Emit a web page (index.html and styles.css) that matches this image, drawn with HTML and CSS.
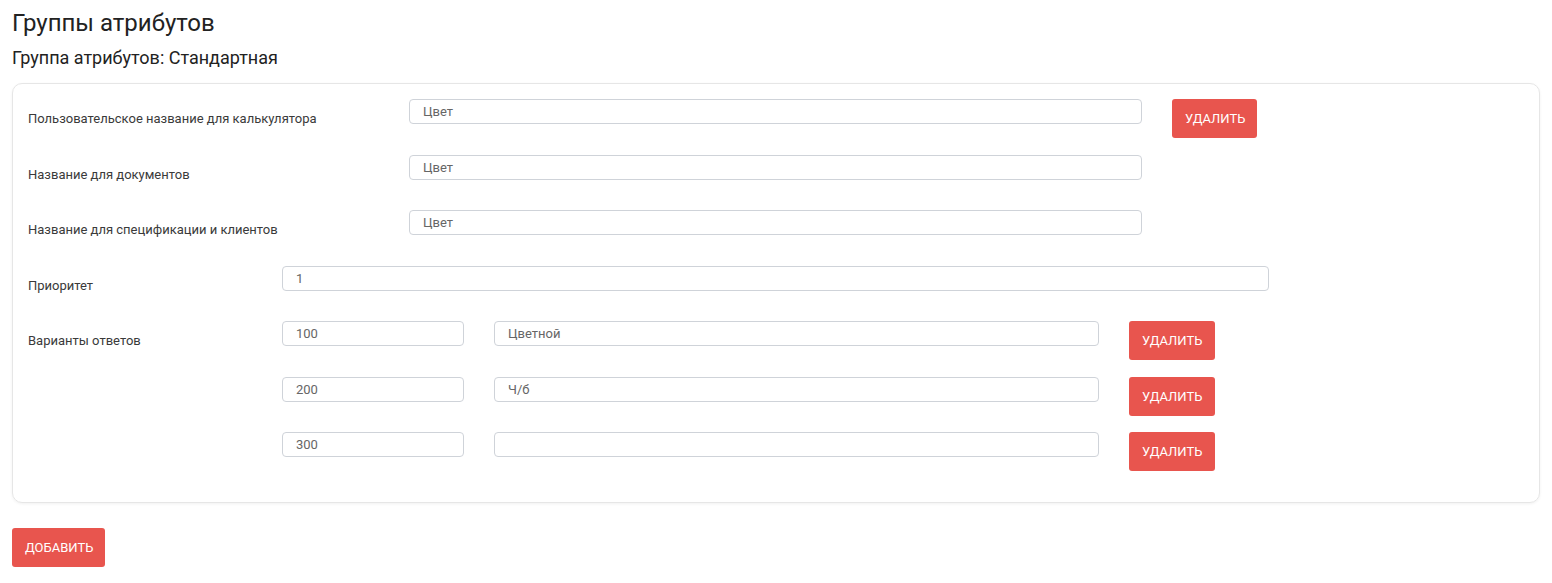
FILE: index.html
```html
<!DOCTYPE html>
<html lang="ru">
<head>
    <meta charset="UTF-8">
    <meta name="viewport" content="width=device-width, initial-scale=1.0">
    <title>Группы атрибутов</title>
    <link rel="stylesheet" href="styles.css">
</head>
<body>

<h1 class="page-title">Группы атрибутов</h1>
<h2 class="group-title">Группа атрибутов: Стандартная</h2>

<div class="card">
    <div class="row row-wide">
        <label class="row-label">Пользовательское название для калькулятора</label>
        <input class="field field-name" type="text" value="Цвет">
        <button class="btn btn-delete-top">Удалить</button>
    </div>
    <div class="row row-wide">
        <label class="row-label">Название для документов</label>
        <input class="field field-name" type="text" value="Цвет">
    </div>
    <div class="row row-wide">
        <label class="row-label">Название для спецификации и клиентов</label>
        <input class="field field-name" type="text" value="Цвет">
    </div>
    <div class="row row-narrow">
        <label class="row-label">Приоритет</label>
        <input class="field field-priority" type="text" value="1">
    </div>
    <div class="row row-narrow">
        <label class="row-label">Варианты ответов</label>
        <input class="field field-code" type="text" value="100">
        <input class="field field-answer" type="text" value="Цветной">
        <button class="btn btn-delete">Удалить</button>
    </div>
    <div class="row row-narrow">
        <span class="row-label"></span>
        <input class="field field-code" type="text" value="200">
        <input class="field field-answer" type="text" value="Ч/б">
        <button class="btn btn-delete">Удалить</button>
    </div>
    <div class="row row-narrow">
        <span class="row-label"></span>
        <input class="field field-code" type="text" value="300">
        <input class="field field-answer" type="text" value="">
        <button class="btn btn-delete">Удалить</button>
    </div>
</div>

<button class="btn btn-add">Добавить</button>

</body>
</html>
```

FILE: styles.css
```css
body {
    font-family: Roboto, "Noto Sans", Arial, sans-serif;
    margin: 0;
    padding: 8px 12px;
    color: #222;
    background-color: #fff;
}
.page-title {
    font-size: 24px;
    font-weight: 400;
    margin: 0 0 8px 0;
    line-height: 30px;
}
.group-title {
    font-size: 18px;
    font-weight: 400;
    margin: 0 0 13px 0;
    line-height: 24px;
}
.card {
    border: 1px solid #e6e6e6;
    border-radius: 10px;
    box-shadow: 0 1px 3px rgba(0, 0, 0, 0.06);
    padding: 15px;
    height: 388px;
}
.row {
    display: flex;
    align-items: flex-start;
    height: 39.5px;
    margin-bottom: 16px;
}
.row-label {
    font-size: 13px;
    color: #3a3a3a;
    line-height: 39px;
    flex-shrink: 0;
}
.row-wide .row-label {
    width: 381px;
}
.row-narrow .row-label {
    width: 254px;
}
.field {
    box-sizing: border-box;
    height: 25px;
    border: 1px solid #cfd3d9;
    border-radius: 4px;
    padding: 0 13px;
    font-family: Roboto, "Noto Sans", Arial, sans-serif;
    font-size: 13px;
    color: #666;
    background-color: #fff;
    outline: none;
}
.field-name {
    width: 733px;
    margin-right: 30px;
}
.field-priority {
    width: 987px;
}
.field-code {
    width: 182px;
    margin-right: 30px;
}
.field-answer {
    width: 605px;
    margin-right: 30px;
}
.btn {
    font-family: Roboto, "Noto Sans", Arial, sans-serif;
    font-size: 13px;
    text-transform: uppercase;
    color: #fff;
    background-color: #e8554e;
    border: none;
    border-radius: 3px;
    height: 39px;
    padding: 0 13px;
    cursor: pointer;
}
.btn-delete-top {
    width: 85px;
}
.btn-delete {
    width: 86px;
}
.btn-add {
    margin-top: 25px;
    height: 39px;
    width: 93px;
}
```
